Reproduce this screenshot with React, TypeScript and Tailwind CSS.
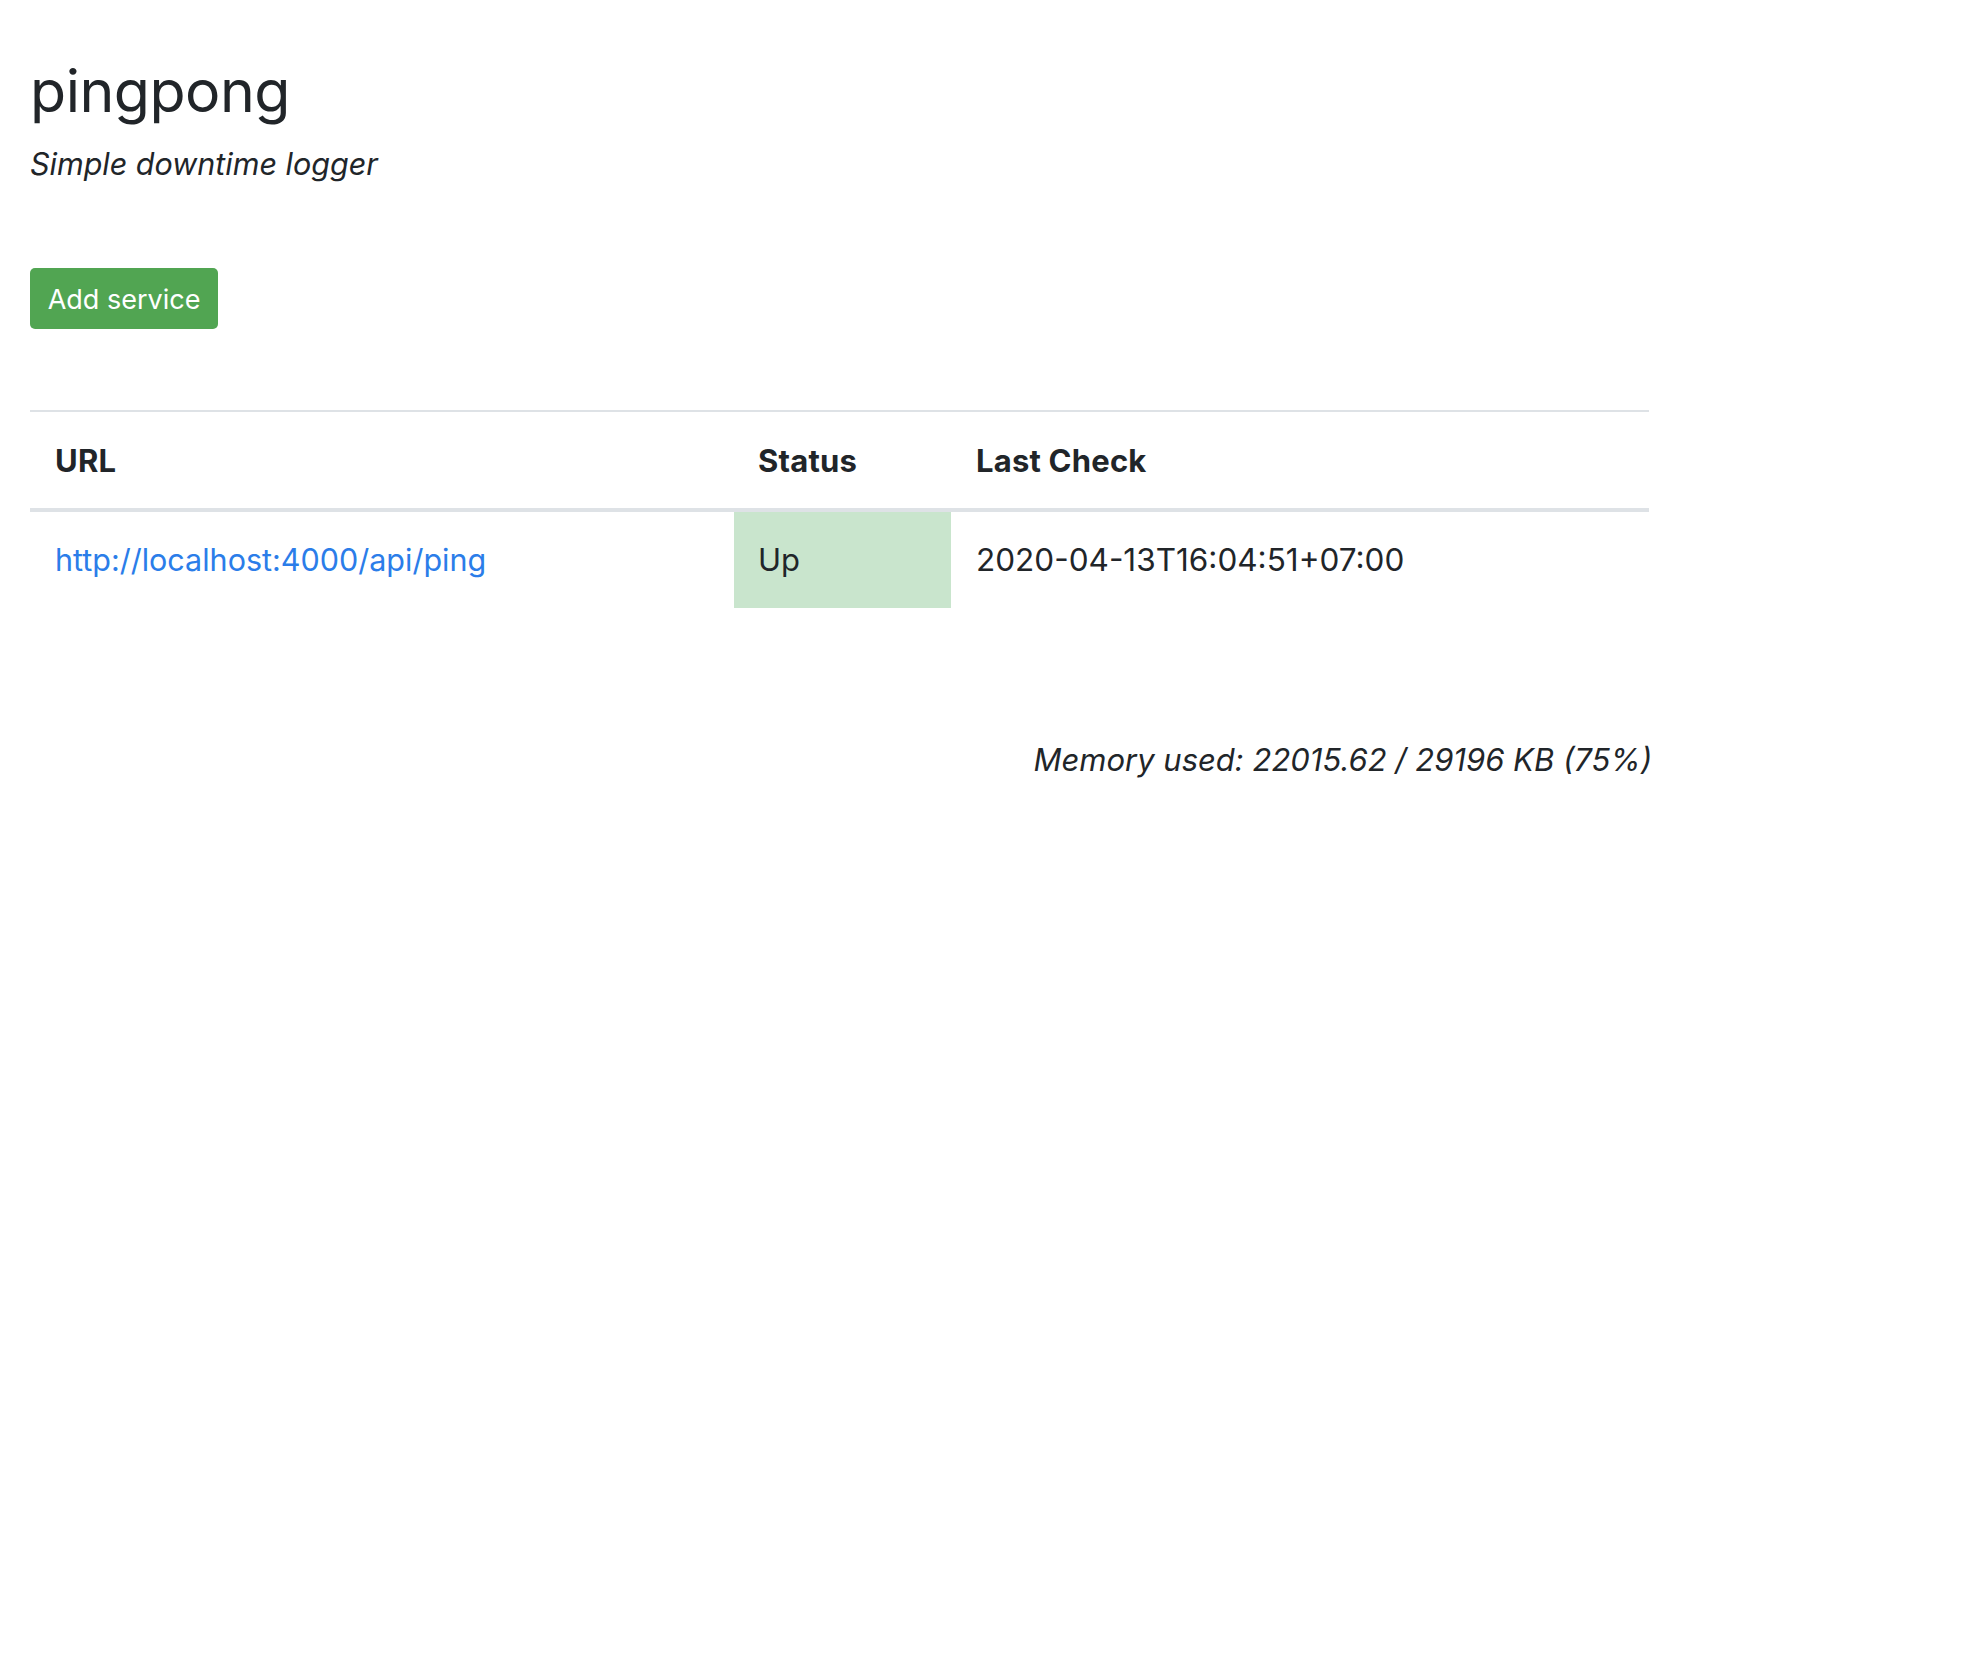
const services = [
  {
    url: "http://localhost:4000/api/ping",
    status: "Up",
    lastCheck: "2020-04-13T16:04:51+07:00",
  },
];

const App = () => {
  return (
    <div className="min-h-screen bg-white text-[#212529] font-['Inter',sans-serif]">
      <div className="w-[1649px] pl-[30px] pt-[56px]">
        <h1 className="text-[59px] leading-[70px] font-normal tracking-[-0.5px]">pingpong</h1>
        <p className="mt-[18px] text-[30.5px] leading-[40px] italic">Simple downtime logger</p>

        <button className="mt-[84px] h-[61px] w-[188px] rounded-[5px] bg-[#51a552] pt-[3px] text-[27px] text-white">
          Add service
        </button>

        <table className="mt-[81px] w-full border-collapse text-left text-[31px]">
          <thead>
            <tr className="h-[99px] border-t-2 border-b-[4px] border-[#dee2e6]">
              <th className="w-[704px] pl-[25px] pt-[2px] font-bold tracking-[0.2px]">URL</th>
              <th className="w-[217px] pl-[24px] pt-[2px] font-bold tracking-[0.2px]">Status</th>
              <th className="pl-[25px] pt-[2px] font-bold tracking-[0.2px]">Last Check</th>
            </tr>
          </thead>
          <tbody>
            {services.map((s) => (
              <tr key={s.url} className="h-[98px]">
                <td className="pl-[25px] text-[30.5px]">
                  <a href={s.url} className="text-[#2b7de9]">
                    {s.url}
                  </a>
                </td>
                <td className="bg-[#c9e5cd] pl-[24px]">{s.status}</td>
                <td className="pl-[25px] text-[31.5px]">{s.lastCheck}</td>
              </tr>
            ))}
          </tbody>
        </table>

        <p className="mt-[132px] -mr-[3px] text-right text-[31px] leading-[40px] italic">
          Memory used: 22015.62 / 29196 KB (75%)
        </p>
      </div>
    </div>
  );
};

export default App;
